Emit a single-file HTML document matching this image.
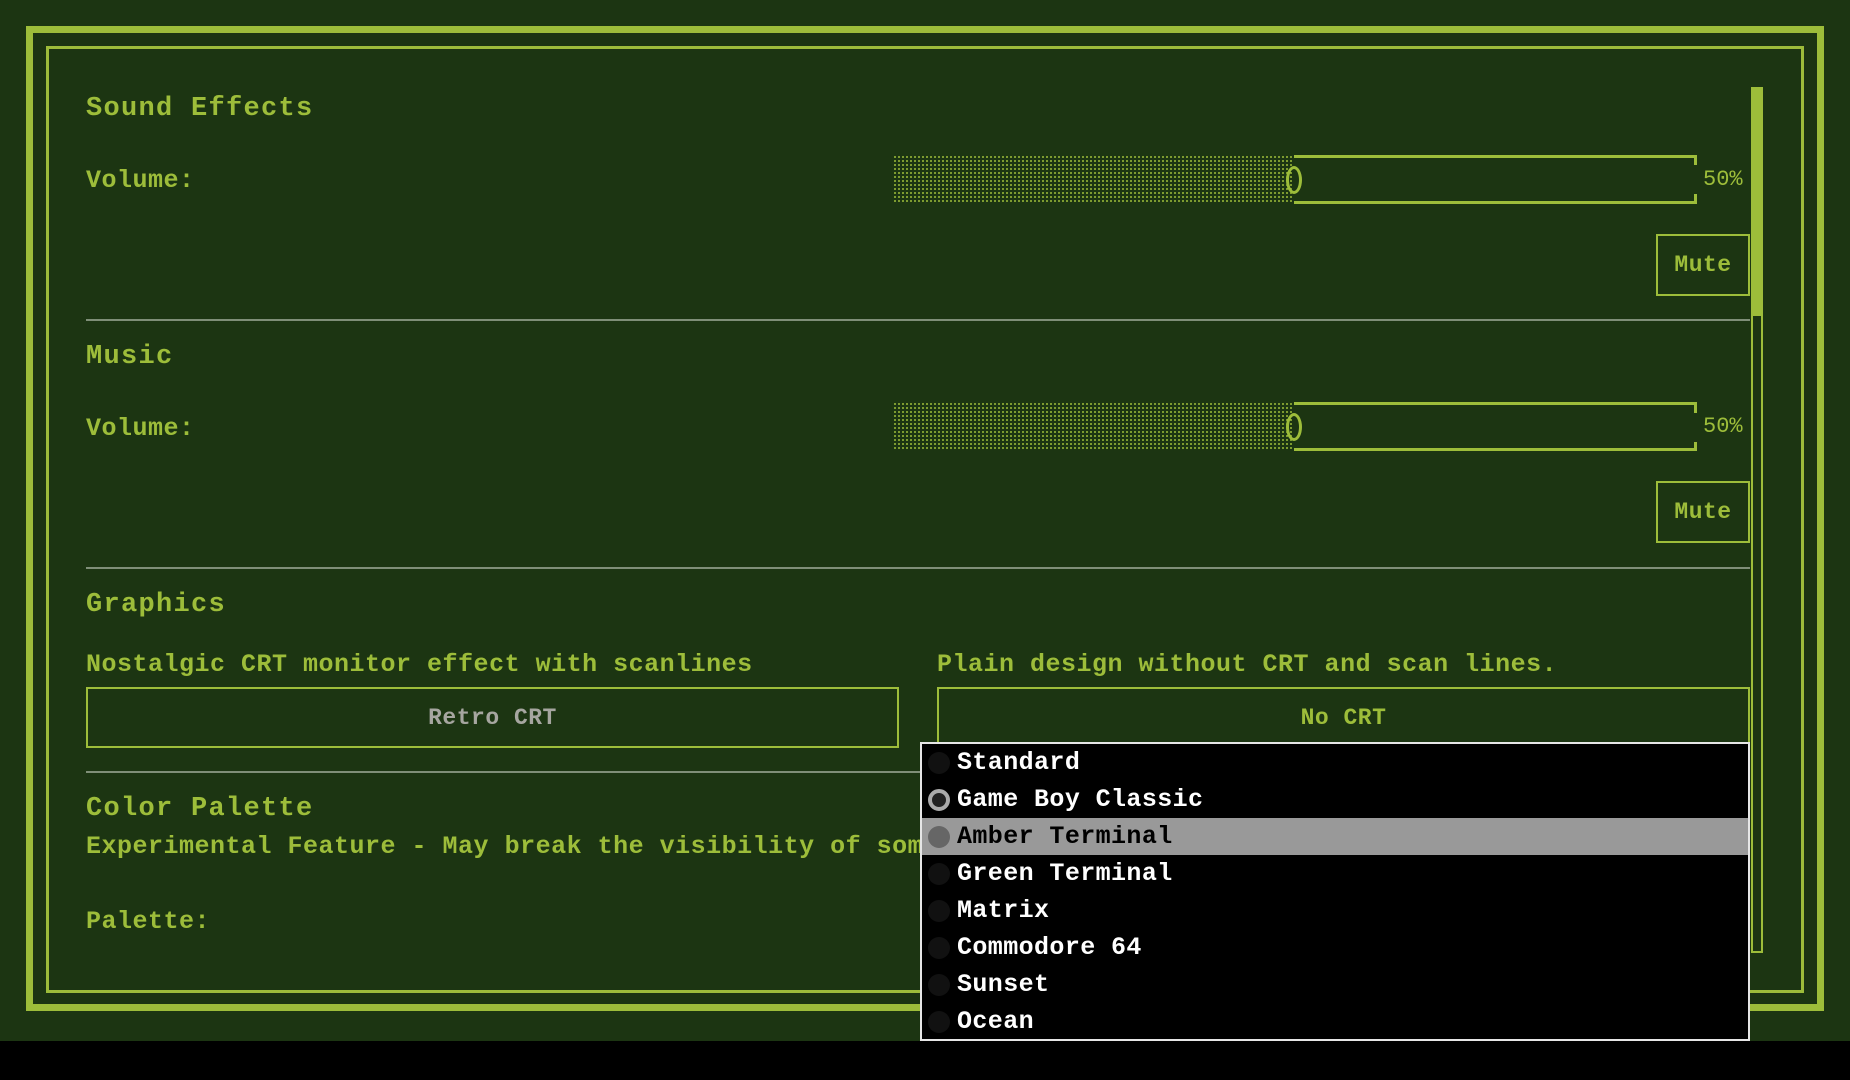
<!DOCTYPE html>
<html><head><meta charset="utf-8"><style>
*{margin:0;padding:0;box-sizing:border-box}
body{width:1850px;height:1080px;background:#000;overflow:hidden;position:relative;font-family:"Liberation Mono",monospace;font-weight:bold;color:#9dbd3a}
.bg{position:absolute;left:0;top:0;width:1850px;height:1041px;background:#1c3512}
.a{position:absolute}
.t{position:absolute;white-space:nowrap;line-height:1}
.h{font-size:27px;letter-spacing:1.3px}
.b{font-size:25px;letter-spacing:0.5px}
.div{position:absolute;height:2px;background:#7f8f78}
.fill{position:absolute;background-image:radial-gradient(#9dbd3a 0.9px,transparent 1px);background-size:4px 4px}
.track{position:absolute;border:3px solid #9dbd3a;border-left:none}
.thumb{position:absolute;width:16px;height:28px;border:3px solid #9dbd3a;border-radius:50%}
.btn{position:absolute;border:2px solid #9dbd3a;font-size:23px;letter-spacing:0.5px;display:flex;align-items:center;justify-content:center}
.dd{position:absolute;left:920px;top:742px;width:830px;height:299px;background:#000;border:2px solid #e6e6e6}
.it{position:absolute;left:0;width:826px;height:37px;color:#fff;font-size:25px;letter-spacing:0.4px;display:flex;align-items:center}
.it span{position:absolute;left:35px}
.r{position:absolute;left:6px;width:22px;height:22px;border-radius:50%;background:#111}
</style></head><body>
<div class="bg"></div>
<div class="a" style="left:26px;top:26px;width:1798px;height:985px;border:7px solid #9dbd3a"></div>
<div class="a" style="left:46px;top:46px;width:1758px;height:947px;border:3px solid #9dbd3a"></div>
<div class="a" style="left:1751px;top:87px;width:12px;height:866px;border:2px solid #9dbd3a"></div>
<div class="a" style="left:1751px;top:87px;width:12px;height:229px;background:#9dbd3a"></div>

<div class="t h" style="left:86px;top:96px">Sound Effects</div>
<div class="t b" style="left:86px;top:168px">Volume:</div>
<div class="fill" style="left:893px;top:155px;width:401px;height:49px"></div>
<div class="track" style="left:1294px;top:155px;width:403px;height:49px"></div>
<div class="a" style="left:1694px;top:165px;width:6px;height:29px;background:#1c3512"></div>
<div class="thumb" style="left:1286px;top:166px"></div>
<div class="t" style="left:1703px;top:169px;font-size:22px;font-weight:normal">50%</div>
<div class="btn" style="left:1656px;top:234px;width:94px;height:62px">Mute</div>
<div class="div" style="left:86px;top:319px;width:1664px"></div>

<div class="t h" style="left:86px;top:344px">Music</div>
<div class="t b" style="left:86px;top:416px">Volume:</div>
<div class="fill" style="left:893px;top:402px;width:401px;height:49px"></div>
<div class="track" style="left:1294px;top:402px;width:403px;height:49px"></div>
<div class="a" style="left:1694px;top:413px;width:6px;height:29px;background:#1c3512"></div>
<div class="thumb" style="left:1286px;top:413px"></div>
<div class="t" style="left:1703px;top:416px;font-size:22px;font-weight:normal">50%</div>
<div class="btn" style="left:1656px;top:481px;width:94px;height:62px">Mute</div>
<div class="div" style="left:86px;top:567px;width:1664px"></div>

<div class="t h" style="left:86px;top:592px">Graphics</div>
<div class="t b" style="left:86px;top:652px">Nostalgic CRT monitor effect with scanlines</div>
<div class="t b" style="left:937px;top:652px">Plain design without CRT and scan lines.</div>
<div class="btn" style="left:86px;top:687px;width:813px;height:61px;color:#a6a6a0">Retro CRT</div>
<div class="btn" style="left:937px;top:687px;width:813px;height:61px">No CRT</div>
<div class="div" style="left:86px;top:771px;width:834px"></div>

<div class="t h" style="left:86px;top:796px">Color Palette</div>
<div class="t b" style="left:86px;top:834px">Experimental Feature - May break the visibility of som</div>
<div class="t b" style="left:86px;top:909px">Palette:</div>

<div class="dd">
<div class="it" style="top:0"><div class="r"></div><span>Standard</span></div>
<div class="it" style="top:37px"><div class="r" style="background:#222;border:4px solid #aaa"></div><span>Game Boy Classic</span></div>
<div class="it" style="top:74px;background:#999;color:#000"><div class="r" style="background:#666"></div><span>Amber Terminal</span></div>
<div class="it" style="top:111px"><div class="r"></div><span>Green Terminal</span></div>
<div class="it" style="top:148px"><div class="r"></div><span>Matrix</span></div>
<div class="it" style="top:185px"><div class="r"></div><span>Commodore 64</span></div>
<div class="it" style="top:222px"><div class="r"></div><span>Sunset</span></div>
<div class="it" style="top:259px"><div class="r"></div><span>Ocean</span></div>
</div>
</body></html>
